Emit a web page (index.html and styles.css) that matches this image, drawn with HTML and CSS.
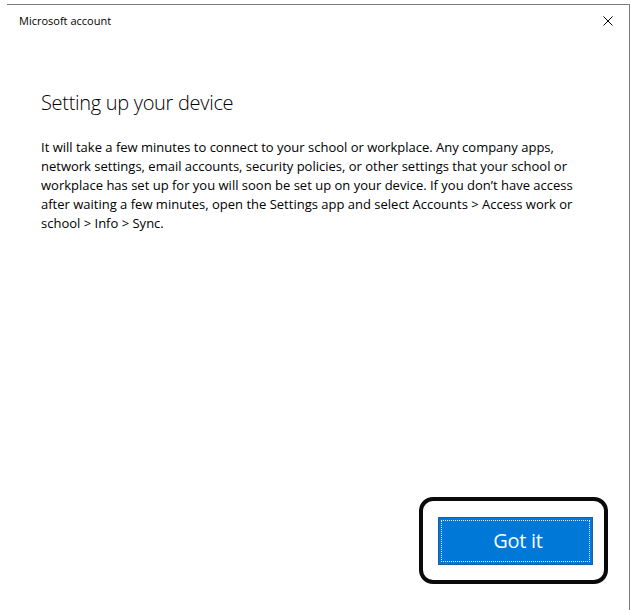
FILE: index.html
```html
<!DOCTYPE html>
<html>
<head>
<meta charset="utf-8">
<link rel="stylesheet" href="styles.css">
</head>
<body>
<div class="window">
  <div class="titlebar">
    <span class="title">Microsoft account</span>
    <svg class="close" width="10" height="10" viewBox="0 0 10 10"><path d="M0.5 0.5 L9.5 9.5 M9.5 0.5 L0.5 9.5" stroke="#000" stroke-width="1" fill="none"/></svg>
  </div>
  <div class="content">
    <h1 class="heading">Setting up your device</h1>
    <p class="text">It will take a few minutes to connect to your school or workplace. Any company apps,<br>network settings, email accounts, security policies, or other settings that your school or<br>workplace has set up for you will soon be set up on your device. If you don’t have access<br>after waiting a few minutes, open the Settings app and select Accounts &gt; Access work or<br>school &gt; Info &gt; Sync.</p>
  </div>
  <div class="footer">
    <div class="highlight">
      <button class="btn"><span class="focus">Got it</span></button>
    </div>
  </div>
</div>
</body>
</html>
```

FILE: styles.css
```css
html, body {
  margin: 0;
  padding: 0;
  height: 100%;
  background: #fff;
}
body {
  font-family: "Open Sans", "Noto Sans", sans-serif;
  color: #000;
  padding-top: 4px;
  padding-left: 7px;
  box-sizing: border-box;
}
.window {
  width: 623px;
  height: 606px;
  box-sizing: border-box;
  border-top: 1px solid #7a7a7a;
  border-right: 1px solid #7a7a7a;
  display: flex;
  flex-direction: column;
}
.titlebar {
  height: 31px;
  display: flex;
  align-items: center;
  justify-content: space-between;
  padding: 0 16px 0 12px;
}
.title {
  font-size: 11px;
  color: #000;
}
.close {
  display: block;
}
.content {
  flex: 1;
  padding: 0 30px 0 34px;
}
.heading {
  font-weight: 300;
  font-size: 20px;
  margin: 53px 0 0 0;
  line-height: 28px;
  color: #000;
  letter-spacing: -0.3px;
}
.text {
  font-size: 13px;
  line-height: 19px;
  margin: 21px 0 0 0;
  white-space: nowrap;
}
.footer {
  display: flex;
  justify-content: flex-end;
  padding: 0 21px 26px 0;
}
.highlight {
  width: 189px;
  height: 87px;
  box-sizing: border-box;
  border: 4px solid #0a0a0a;
  border-radius: 14px;
  display: flex;
  align-items: center;
  justify-content: center;
  padding-left: 3px;
}
.btn {
  width: 155px;
  height: 48px;
  background: #0078d7;
  border: 1px solid #1f5fa0;
  padding: 2px;
  margin: 0;
  display: flex;
  font-family: inherit;
}
.focus {
  flex: 1;
  border: 1px dotted #e8f0fa;
  color: #fff;
  font-size: 20px;
  letter-spacing: -0.3px;
  display: flex;
  align-items: center;
  justify-content: center;
  padding-left: 6px;
}
```
